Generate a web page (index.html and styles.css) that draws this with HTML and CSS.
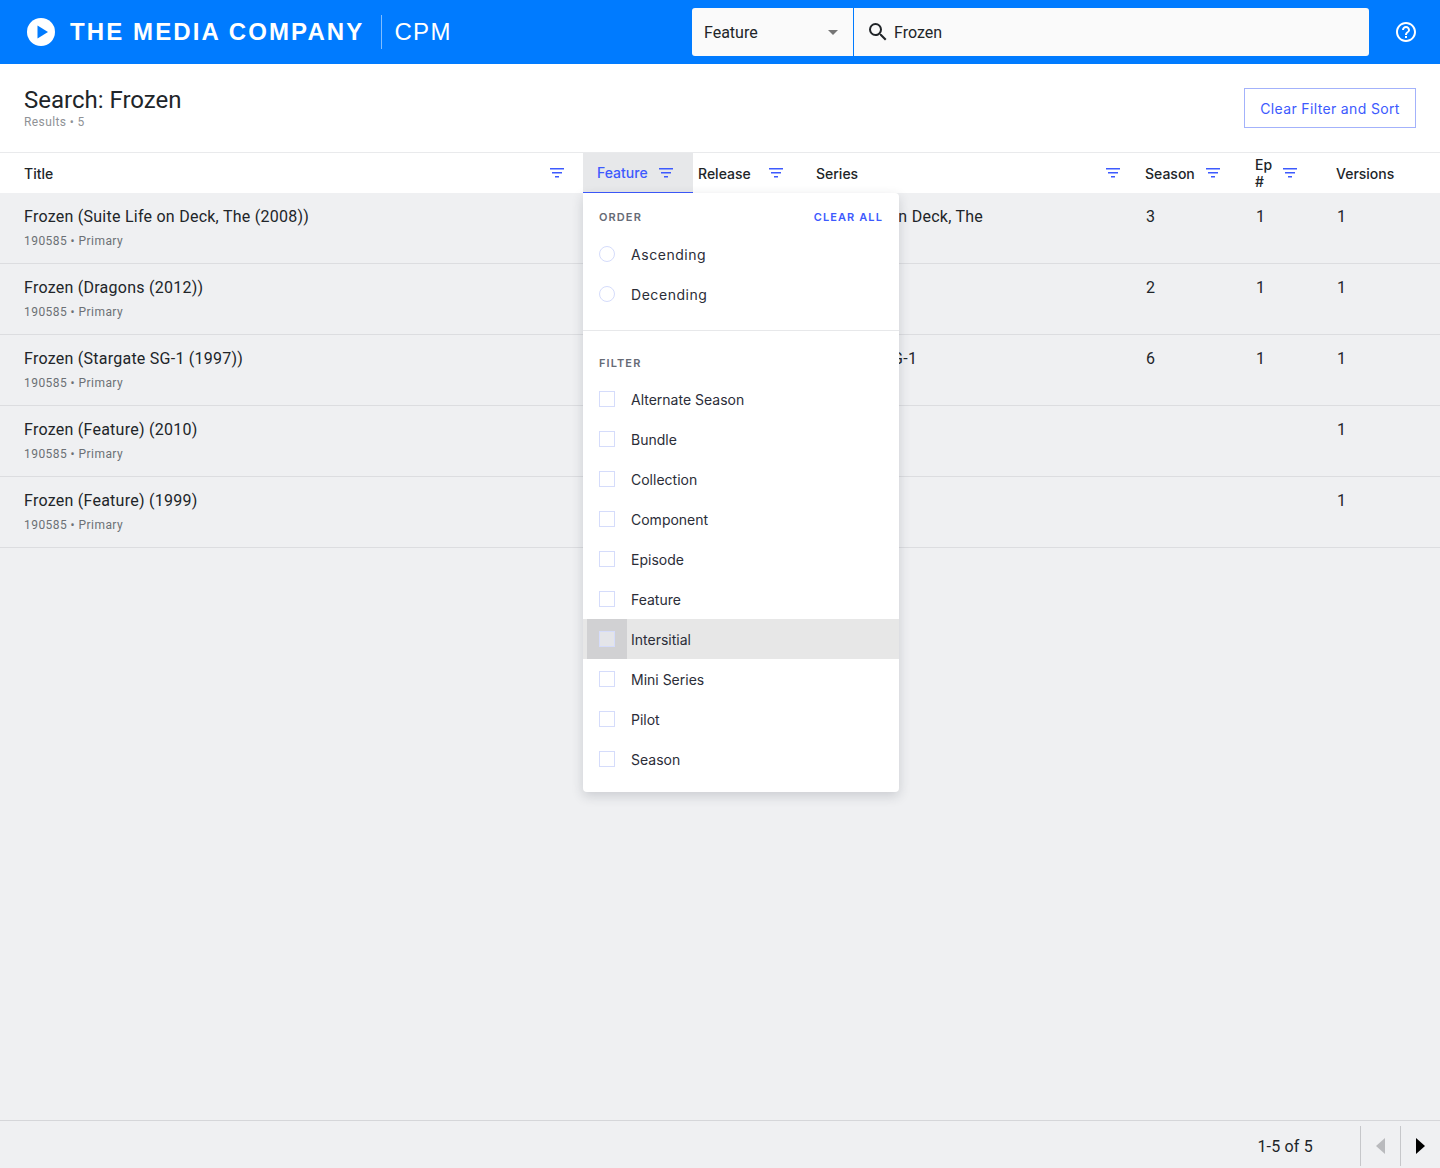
FILE: index.html
```html
<!DOCTYPE html>
<html>
<head>
  <meta charset="UTF-8">
  <title>CPM Search</title>
  <link rel="stylesheet" href="styles.css">
</head>
<body>
  <header class="topbar">
    <div class="brand">
      <svg class="brand-logo" viewBox="0 0 28 28" width="28" height="28">
        <circle cx="14" cy="14" r="14" fill="#fff"/>
        <path d="M10.5 7.5 L21 14 L10.5 20.5 Z" fill="#007bff"/>
      </svg>
      <span class="brand-name">THE MEDIA COMPANY</span>
      <span class="brand-app">CPM</span>
    </div>
    <div class="search">
      <div class="search-type">
        <span>Feature</span>
        <span class="caret"></span>
      </div>
      <div class="search-input">
        <svg viewBox="0 0 24 24" width="24" height="24">
          <path fill="#212529" d="M15.5 14h-.79l-.28-.27A6.47 6.47 0 0 0 16 9.5 6.5 6.5 0 1 0 9.5 16c1.61 0 3.09-.59 4.23-1.57l.27.28v.79l5 4.99L20.49 19l-4.99-5zm-6 0C7.01 14 5 11.99 5 9.5S7.01 5 9.5 5 14 7.01 14 9.5 11.99 14 9.5 14z"/>
        </svg>
        <span>Frozen</span>
      </div>
    </div>
    <svg class="help" viewBox="0 0 24 24" width="24" height="24">
      <path fill="#fff" d="M11 18h2v-2h-2v2zm1-16C6.48 2 2 6.48 2 12s4.48 10 10 10 10-4.48 10-10S17.52 2 12 2zm0 18c-4.41 0-8-3.59-8-8s3.59-8 8-8 8 3.59 8 8-3.59 8-8 8zm0-14c-2.21 0-4 1.79-4 4h2c0-1.1.9-2 2-2s2 .9 2 2c0 2-3 1.75-3 5h2c0-2.25 3-2.5 3-5 0-2.21-1.79-4-4-4z"/>
    </svg>
  </header>

  <section class="page-head">
    <div>
      <h1>Search: Frozen</h1>
      <div class="results">Results • 5</div>
    </div>
    <button class="clear-btn">Clear Filter and Sort</button>
  </section>

  <main class="table">
    <div class="row head">
      <div class="cell c-title">Title <svg class="filter" viewBox="0 0 14 10" width="14" height="10"><path d="M0 0h14v1.4H0zM2 4h10v1.4H2zM5 8h4v1.4H5z"/></svg></div>
      <div class="cell c-feature active">Feature <svg class="filter" viewBox="0 0 14 10" width="14" height="10"><path d="M0 0h14v1.4H0zM2 4h10v1.4H2zM5 8h4v1.4H5z"/></svg></div>
      <div class="cell c-release">Release <svg class="filter" viewBox="0 0 14 10" width="14" height="10"><path d="M0 0h14v1.4H0zM2 4h10v1.4H2zM5 8h4v1.4H5z"/></svg></div>
      <div class="cell c-series">Series <svg class="filter" viewBox="0 0 14 10" width="14" height="10"><path d="M0 0h14v1.4H0zM2 4h10v1.4H2zM5 8h4v1.4H5z"/></svg></div>
      <div class="cell c-season">Season <svg class="filter" viewBox="0 0 14 10" width="14" height="10"><path d="M0 0h14v1.4H0zM2 4h10v1.4H2zM5 8h4v1.4H5z"/></svg></div>
      <div class="cell c-ep">Ep # <svg class="filter" viewBox="0 0 14 10" width="14" height="10"><path d="M0 0h14v1.4H0zM2 4h10v1.4H2zM5 8h4v1.4H5z"/></svg></div>
      <div class="cell c-versions">Versions</div>
    </div>

    <div class="row item">
      <div class="cell c-title"><div>Frozen (Suite Life on Deck, The (2008))<div class="sub">190585 • Primary</div></div></div>
      <div class="cell c-feature"></div>
      <div class="cell c-release"></div>
      <div class="cell c-series">Suite Life on Deck, The</div>
      <div class="cell c-season">3</div>
      <div class="cell c-ep">1</div>
      <div class="cell c-versions">1</div>
    </div>
    <div class="row item">
      <div class="cell c-title"><div>Frozen (Dragons (2012))<div class="sub">190585 • Primary</div></div></div>
      <div class="cell c-feature"></div>
      <div class="cell c-release"></div>
      <div class="cell c-series">Dragons</div>
      <div class="cell c-season">2</div>
      <div class="cell c-ep">1</div>
      <div class="cell c-versions">1</div>
    </div>
    <div class="row item">
      <div class="cell c-title"><div>Frozen (Stargate SG-1 (1997))<div class="sub">190585 • Primary</div></div></div>
      <div class="cell c-feature"></div>
      <div class="cell c-release"></div>
      <div class="cell c-series">Stargate SG-1</div>
      <div class="cell c-season">6</div>
      <div class="cell c-ep">1</div>
      <div class="cell c-versions">1</div>
    </div>
    <div class="row item">
      <div class="cell c-title"><div>Frozen (Feature) (2010)<div class="sub">190585 • Primary</div></div></div>
      <div class="cell c-feature"></div>
      <div class="cell c-release"></div>
      <div class="cell c-series"></div>
      <div class="cell c-season"></div>
      <div class="cell c-ep"></div>
      <div class="cell c-versions">1</div>
    </div>
    <div class="row item">
      <div class="cell c-title"><div>Frozen (Feature) (1999)<div class="sub">190585 • Primary</div></div></div>
      <div class="cell c-feature"></div>
      <div class="cell c-release"></div>
      <div class="cell c-series"></div>
      <div class="cell c-season"></div>
      <div class="cell c-ep"></div>
      <div class="cell c-versions">1</div>
    </div>

    <div class="menu">
      <div class="menu-head">
        <span class="menu-label">ORDER</span>
        <span class="clear-all">CLEAR ALL</span>
      </div>
      <div class="opt order"><span class="radio"></span>Ascending</div>
      <div class="opt order"><span class="radio"></span>Decending</div>
      <div class="menu-divider"></div>
      <div class="menu-head filter-head">
        <span class="menu-label">FILTER</span>
      </div>
      <div class="opt"><span class="check"></span>Alternate Season</div>
      <div class="opt"><span class="check"></span>Bundle</div>
      <div class="opt"><span class="check"></span>Collection</div>
      <div class="opt"><span class="check"></span>Component</div>
      <div class="opt"><span class="check"></span>Episode</div>
      <div class="opt"><span class="check"></span>Feature</div>
      <div class="opt hover"><span class="check"></span>Intersitial</div>
      <div class="opt"><span class="check"></span>Mini Series</div>
      <div class="opt"><span class="check"></span>Pilot</div>
      <div class="opt"><span class="check"></span>Season</div>
    </div>
  </main>

  <footer class="pager">
    <span class="pager-text">1-5 of 5</span>
    <div class="pager-btn"><span class="arrow-left"></span></div>
    <div class="pager-btn"><span class="arrow-right"></span></div>
  </footer>
</body>
</html>
```

FILE: styles.css
```css
* {
  box-sizing: border-box;
}

body {
  margin: 0;
  height: 1168px;
  display: flex;
  flex-direction: column;
  font-family: Roboto, sans-serif;
  color: #212529;
  background-color: #eff0f2;
  overflow: hidden;
}

/* Top bar */
.topbar {
  height: 64px;
  flex: none;
  display: flex;
  align-items: center;
  background-color: #007bff;
}

.brand {
  width: 692px;
  padding-left: 27px;
  display: flex;
  align-items: center;
  color: #fff;
}

.brand-name {
  margin-left: 15px;
  font-family: "Liberation Sans", Arial, sans-serif;
  font-size: 24px;
  font-weight: bold;
  letter-spacing: 2.1px;
  line-height: 34px;
}

.brand-app {
  margin-left: 17px;
  padding-left: 12px;
  border-left: 1px solid rgba(255,255,255,0.5);
  font-family: "Liberation Sans", Arial, sans-serif;
  font-size: 24px;
  letter-spacing: 1.4px;
  line-height: 34px;
}

.search {
  width: 677px;
  height: 48px;
  display: flex;
  font-size: 16px;
  background-color: #fafafa;
  border-radius: 3px;
}

.search-type {
  width: 162px;
  padding: 0 15px 0 12px;
  display: flex;
  align-items: center;
  justify-content: space-between;
  border-right: 1px solid #007bff;
}

.caret {
  width: 0;
  height: 0;
  border-left: 5px solid transparent;
  border-right: 5px solid transparent;
  border-top: 5px solid #757575;
}

.search-input {
  flex: 1;
  padding-left: 12px;
  display: flex;
  align-items: center;
  gap: 4px;
}

.help {
  margin-left: 25px;
}

/* Page heading */
.page-head {
  height: 89px;
  flex: none;
  padding: 24px 24px 0;
  display: flex;
  justify-content: space-between;
  align-items: flex-start;
  background-color: #fff;
  border-bottom: 1px solid #e9eaec;
}

h1 {
  margin: 0;
  font-size: 24px;
  font-weight: 400;
  line-height: 24px;
}

.results {
  margin-top: 2px;
  font-size: 12px;
  line-height: 16px;
  letter-spacing: 0.4px;
  color: #8f9296;
}

.clear-btn {
  width: 172px;
  height: 40px;
  padding: 0;
  font-family: Inter, sans-serif;
  font-size: 14px;
  letter-spacing: 0.35px;
  color: #3d5afe;
  background-color: #fff;
  border: 1px solid #a3b2fb;
}

/* Table */
.table {
  position: relative;
  flex: 1;
}

.row {
  display: flex;
}

.cell {
  display: flex;
  align-items: center;
  justify-content: space-between;
}

.head {
  height: 40px;
  background-color: #fff;
  font-family: Inter, sans-serif;
  font-size: 14px;
  font-weight: 500;
}

.filter {
  fill: #3d5afe;
  flex: none;
}

.c-title { width: 583px; padding: 0 19px 0 24px; }
.c-feature { width: 110px; padding: 0 20px 0 14px; }
.c-release { width: 109px; padding: 0 19px 0 5px; }
.c-series { width: 329px; padding: 0 11px 0 14px; }
.c-season { width: 110px; padding: 0 21px 0 14px; }
.c-ep { width: 81px; padding: 0 25px 0 14px; }
.c-versions { flex: 1; padding-left: 14px; }

.head .active {
  color: #3d5afe;
  background-color: #e7e8ea;
  border-bottom: 1px solid #3d5afe;
}

.item {
  height: 71px;
  font-size: 16px;
  line-height: 22px;
  letter-spacing: 0.25px;
  border-bottom: 1px solid #dcdde0;
}

.item .cell {
  align-items: flex-start;
  padding-top: 13px;
}

.item .c-season,
.item .c-ep,
.item .c-versions {
  padding-left: 15px;
}

.sub {
  margin-top: 4px;
  font-size: 12px;
  line-height: 18px;
  letter-spacing: 0.45px;
  color: #6c7075;
}

/* Column menu */
.menu {
  position: absolute;
  left: 583px;
  top: 40px;
  width: 316px;
  height: 599px;
  background-color: #fff;
  border-radius: 0 4px 4px 4px;
  box-shadow: 0 4px 12px rgba(40,44,60,0.18);
  font-family: Inter, sans-serif;
  font-size: 14px;
  color: #2b2d38;
}

.menu-head {
  height: 41px;
  padding: 16px 16px 0;
  display: flex;
  justify-content: space-between;
  font-size: 11px;
  font-weight: 600;
  line-height: 16px;
  letter-spacing: 1.1px;
}

.menu-label {
  color: #666a75;
}

.clear-all {
  color: #3d5afe;
}

.filter-head {
  height: 48px;
  padding-top: 24px;
}

.menu-divider {
  margin-top: 16px;
  border-top: 1px solid #e7e8ea;
}

.opt {
  height: 40px;
  padding-left: 16px;
  display: flex;
  align-items: center;
}

.order {
  letter-spacing: 0.55px;
}

.radio,
.check {
  width: 16px;
  height: 16px;
  margin-right: 16px;
  flex: none;
  border: 1px solid #d5dcfb;
}

.radio {
  border-radius: 50%;
}

.opt.hover {
  background-color: #e7e7e7;
}

.opt.hover .check {
  box-shadow: 0 0 0 12px #d1d1d3;
  background-color: #e4e5e9;
}

/* Pager */
.pager {
  height: 48px;
  flex: none;
  padding-top: 3px;
  display: flex;
  align-items: center;
  justify-content: flex-end;
  border-top: 1px solid #d5d6d9;
}

.pager-text {
  margin-right: 47px;
  font-size: 16px;
  letter-spacing: 0.2px;
}

.pager-btn {
  width: 40px;
  height: 40px;
  display: flex;
  align-items: center;
  justify-content: center;
  border-left: 1px solid #c6c7ca;
}

.arrow-left {
  border-top: 8px solid transparent;
  border-bottom: 8px solid transparent;
  border-right: 9px solid #b9babd;
}

.arrow-right {
  border-top: 8px solid transparent;
  border-bottom: 8px solid transparent;
  border-left: 9px solid #000;
}
```
